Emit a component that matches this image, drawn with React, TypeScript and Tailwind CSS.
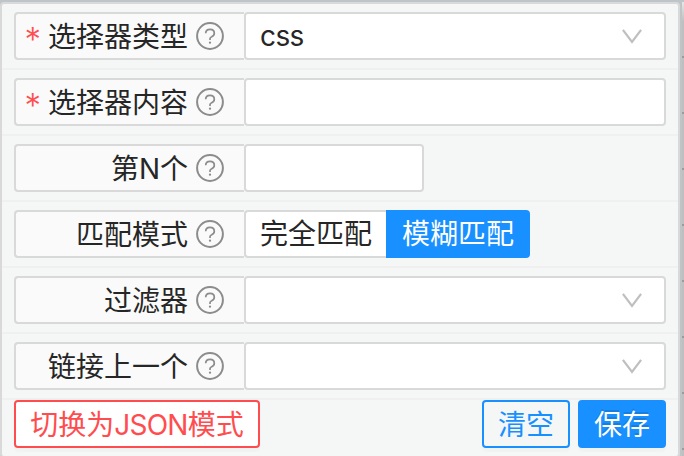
import type { ReactNode } from "react";

function Help() {
  return (
    <svg className="ml-2 size-7 shrink-0" viewBox="0 0 28 28" fill="none" stroke="#8c8c8c" strokeWidth="2">
      <circle cx="14" cy="14" r="12.9" />
      <path d="M9.7 11.3C9.7 8.8 11.5 7.4 14 7.4s4.3 1.5 4.3 3.8c0 1.8-1.1 2.9-2.6 3.5-1.2.5-1.7 1-1.7 2v1.2" strokeWidth="1.7" />
      <circle cx="14" cy="20.7" r="1.15" fill="#8c8c8c" stroke="none" />
    </svg>
  );
}

function Chevron() {
  return (
    <svg className="h-[15px] w-5" viewBox="0 0 20 15" fill="none" stroke="#bfbfbf" strokeWidth="2.2">
      <path d="M.9.8 10 13 19.1.8" />
    </svg>
  );
}

function Row({ label, required, children }: { label: string; required?: boolean; children: ReactNode }) {
  return (
    <div className="flex h-[66px] border-b-2 border-[#f0f0f0] px-3 py-2">
      <div className="flex h-12 w-[230px] shrink-0 items-center justify-end rounded-l-[4px] border-2 border-r-0 border-[#d9d9d9] bg-[#fafafa] pr-5">
        {required && <span className="mr-[7px] pt-[7px] font-['Inter'] text-[33px] font-light leading-none text-[#ff4d4f]">*</span>}
        <span className="whitespace-nowrap pt-0.5 leading-[44px]">{label}</span>
        <Help />
      </div>
      {children}
    </div>
  );
}

function Field({ value, select }: { value?: string; select?: boolean }) {
  return (
    <div className="flex h-12 flex-1 items-center justify-between rounded-[4px] border-2 border-[#d9d9d9] bg-white pl-3.5 pr-[22px]">
      <span className="leading-[44px] tracking-[-0.6px]">{value}</span>
      {select && <Chevron />}
    </div>
  );
}

export default function App() {
  return (
    <div className="relative h-[456px] w-[684px] overflow-hidden bg-[#bdc5c9] pt-0.5 font-['Inter','Noto_Sans_CJK_SC',sans-serif] text-[28px] text-[#262626]">
      <div className="absolute right-0 top-0.5 h-[454px] w-0.5 bg-linear-to-b from-[#e6e6e6] to-[#bfbfbf] to-[20px]">
        {[54, 110, 166, 222, 278, 334, 390, 446].map((y) => (
          <div key={y} className="absolute h-0.5 w-0.5 bg-[#9b9b9b]" style={{ top: y }} />
        ))}
      </div>
      <div className="h-[456px] w-[680px] rounded-[4px] border-2 border-[#d9d9d9] bg-[#f5f7f7]">
        <Row label="选择器类型" required><Field value="css" select /></Row>
        <Row label="选择器内容" required><Field /></Row>
        <Row label="第N个">
          <div className="h-12 w-[180px] rounded-[4px] border-2 border-[#d9d9d9] bg-white" />
        </Row>
        <Row label="匹配模式">
          <button className="h-12 w-[142px] rounded-l-[4px] border-2 border-r-0 border-[#d9d9d9] bg-white pt-px leading-[43px]">完全匹配</button>
          <button className="h-12 w-36 rounded-r-[4px] bg-[#1890ff] pt-px leading-[47px] text-white">模糊匹配</button>
        </Row>
        <Row label="过滤器"><Field select /></Row>
        <Row label="链接上一个"><Field select /></Row>
        <div className="flex gap-2 px-3">
          <button className="mr-auto h-12 w-[246px] whitespace-nowrap rounded-[4px] border-2 border-[#ff4d4f] bg-white pt-0.5 leading-[42px] text-[#ff4d4f] shadow-[0_4px_0_rgba(0,0,0,0.015)]">切换为<span className="tracking-[-0.8px]">JSON</span>模式</button>
          <button className="h-12 w-[88px] rounded-[4px] border-2 border-[#1890ff] pt-0.5 leading-[42px] text-[#1890ff] shadow-[0_4px_0_rgba(0,0,0,0.015)]">清空</button>
          <button className="h-12 w-[88px] rounded-[4px] bg-[#1890ff] pt-0.5 leading-[46px] text-white shadow-[0_4px_0_rgba(0,0,0,0.015)] [text-shadow:0_-2px_0_rgba(0,0,0,0.12)]">保存</button>
        </div>
      </div>
    </div>
  );
}
